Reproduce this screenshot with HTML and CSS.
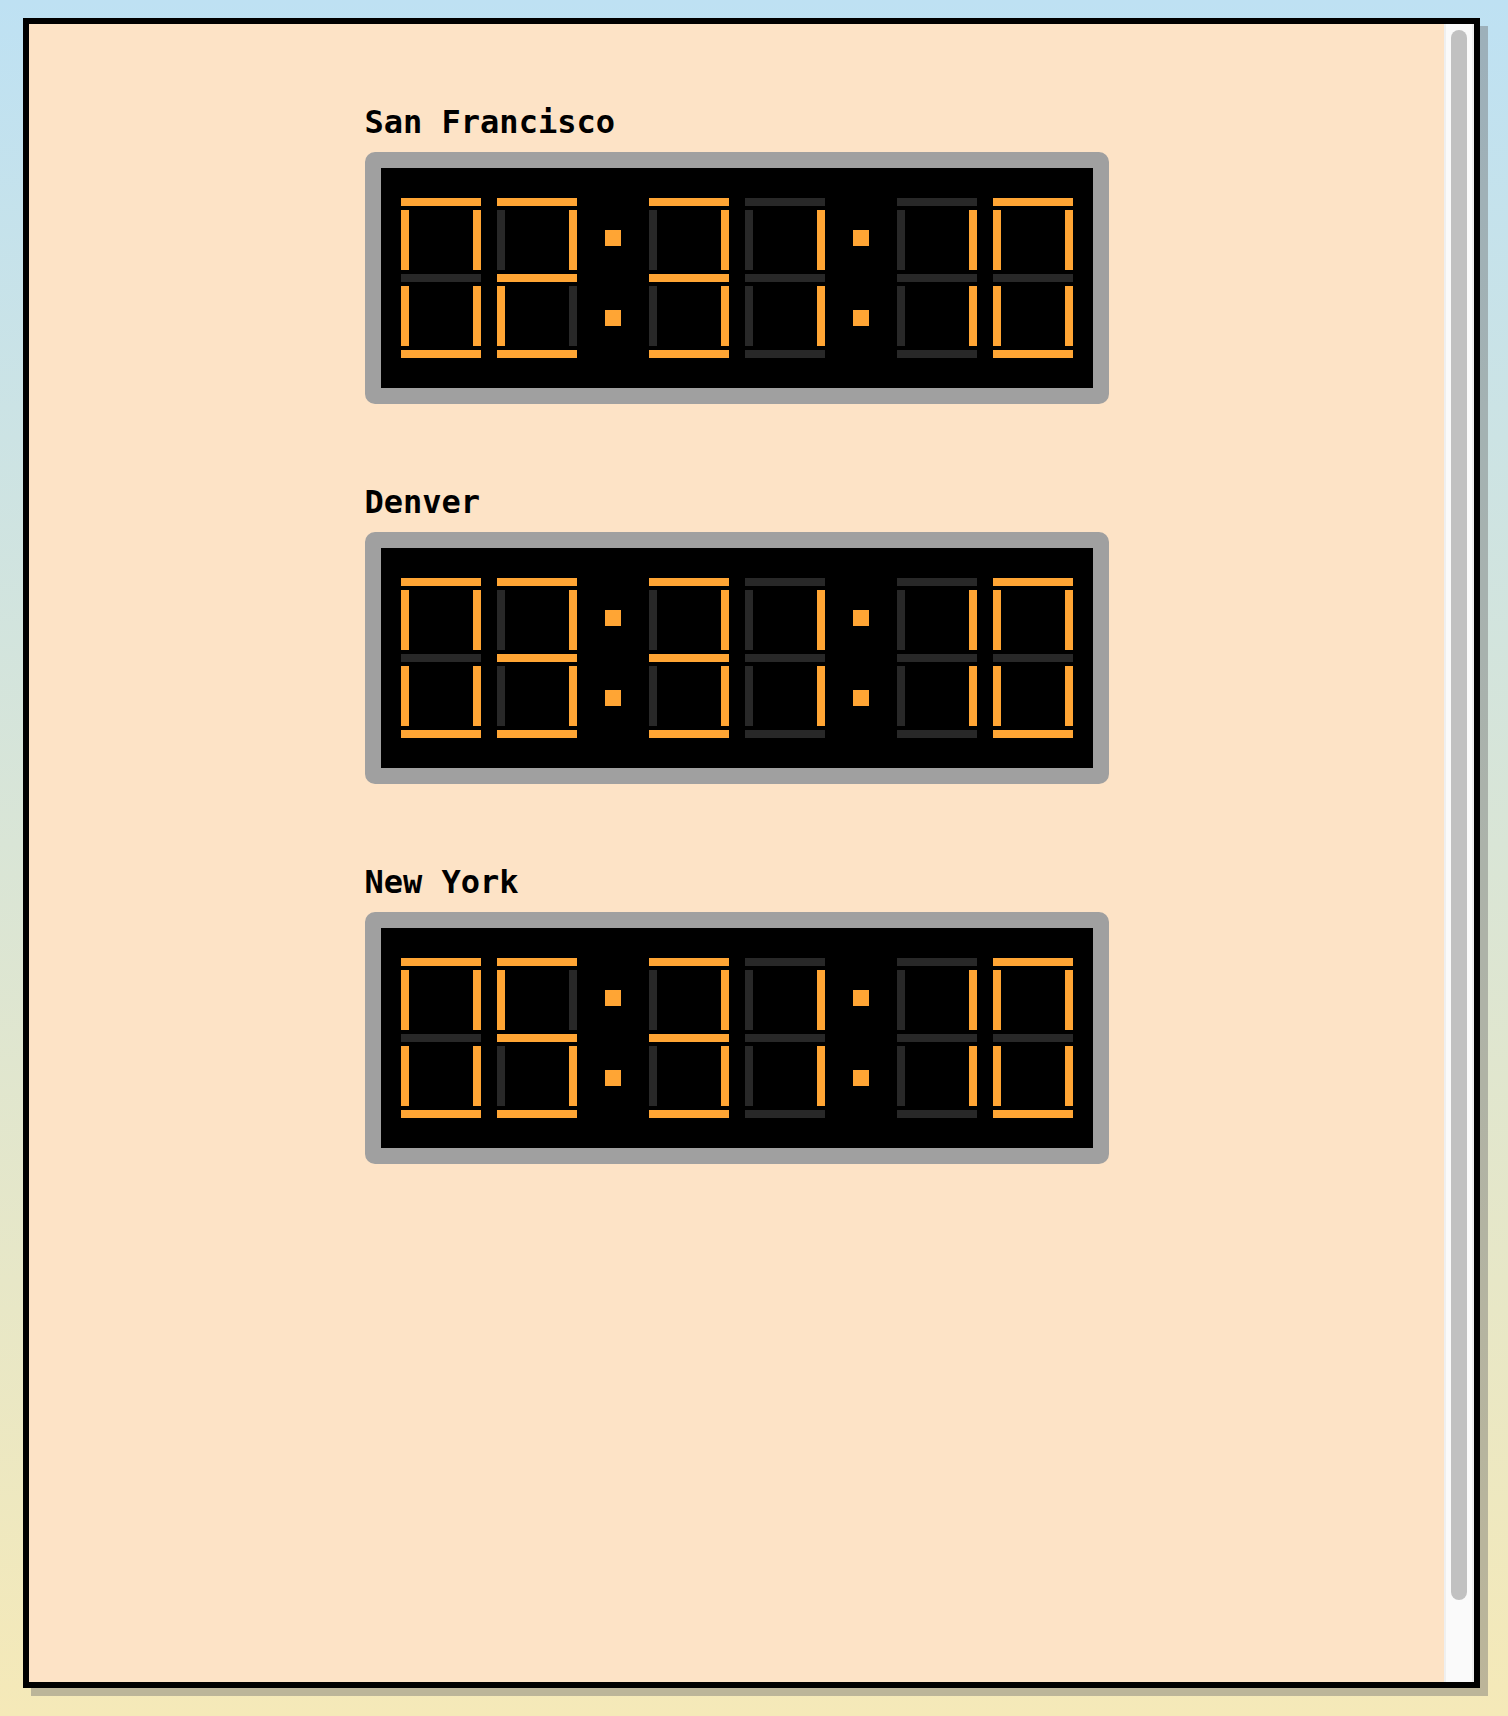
FILE: index.html
```html
<!DOCTYPE html>
<html lang="en">
<head>
<meta charset="utf-8">
<title>World Clocks</title>
<link rel="stylesheet" href="styles.css">
</head>
<body>
<div class="frame">
  <div class="viewport">
    <div class="content">
      <section class="city">
        <div class="label">San Francisco</div>
        <div class="clock">
          <div class="digit d0"><span class="a"></span><span class="f"></span><span class="b"></span><span class="g"></span><span class="e"></span><span class="c"></span><span class="d"></span></div>
          <div class="digit d2"><span class="a"></span><span class="f"></span><span class="b"></span><span class="g"></span><span class="e"></span><span class="c"></span><span class="d"></span></div>
          <div class="colon"><i></i><i></i></div>
          <div class="digit d3"><span class="a"></span><span class="f"></span><span class="b"></span><span class="g"></span><span class="e"></span><span class="c"></span><span class="d"></span></div>
          <div class="digit d1"><span class="a"></span><span class="f"></span><span class="b"></span><span class="g"></span><span class="e"></span><span class="c"></span><span class="d"></span></div>
          <div class="colon"><i></i><i></i></div>
          <div class="digit d1"><span class="a"></span><span class="f"></span><span class="b"></span><span class="g"></span><span class="e"></span><span class="c"></span><span class="d"></span></div>
          <div class="digit d0"><span class="a"></span><span class="f"></span><span class="b"></span><span class="g"></span><span class="e"></span><span class="c"></span><span class="d"></span></div>
        </div>
      </section>
      <section class="city">
        <div class="label">Denver</div>
        <div class="clock">
          <div class="digit d0"><span class="a"></span><span class="f"></span><span class="b"></span><span class="g"></span><span class="e"></span><span class="c"></span><span class="d"></span></div>
          <div class="digit d3"><span class="a"></span><span class="f"></span><span class="b"></span><span class="g"></span><span class="e"></span><span class="c"></span><span class="d"></span></div>
          <div class="colon"><i></i><i></i></div>
          <div class="digit d3"><span class="a"></span><span class="f"></span><span class="b"></span><span class="g"></span><span class="e"></span><span class="c"></span><span class="d"></span></div>
          <div class="digit d1"><span class="a"></span><span class="f"></span><span class="b"></span><span class="g"></span><span class="e"></span><span class="c"></span><span class="d"></span></div>
          <div class="colon"><i></i><i></i></div>
          <div class="digit d1"><span class="a"></span><span class="f"></span><span class="b"></span><span class="g"></span><span class="e"></span><span class="c"></span><span class="d"></span></div>
          <div class="digit d0"><span class="a"></span><span class="f"></span><span class="b"></span><span class="g"></span><span class="e"></span><span class="c"></span><span class="d"></span></div>
        </div>
      </section>
      <section class="city">
        <div class="label">New York</div>
        <div class="clock">
          <div class="digit d0"><span class="a"></span><span class="f"></span><span class="b"></span><span class="g"></span><span class="e"></span><span class="c"></span><span class="d"></span></div>
          <div class="digit d5"><span class="a"></span><span class="f"></span><span class="b"></span><span class="g"></span><span class="e"></span><span class="c"></span><span class="d"></span></div>
          <div class="colon"><i></i><i></i></div>
          <div class="digit d3"><span class="a"></span><span class="f"></span><span class="b"></span><span class="g"></span><span class="e"></span><span class="c"></span><span class="d"></span></div>
          <div class="digit d1"><span class="a"></span><span class="f"></span><span class="b"></span><span class="g"></span><span class="e"></span><span class="c"></span><span class="d"></span></div>
          <div class="colon"><i></i><i></i></div>
          <div class="digit d1"><span class="a"></span><span class="f"></span><span class="b"></span><span class="g"></span><span class="e"></span><span class="c"></span><span class="d"></span></div>
          <div class="digit d0"><span class="a"></span><span class="f"></span><span class="b"></span><span class="g"></span><span class="e"></span><span class="c"></span><span class="d"></span></div>
        </div>
      </section>
    </div>
  </div>
  <div class="scrollbar"><div class="thumb"></div></div>
</div>
</body>
</html>
```

FILE: styles.css
```css
html {
  min-height: 100%;
  background: linear-gradient(to bottom, #bee1f3 0%, #f5e9b8 100%);
}

body {
  margin: 0;
  padding: 18px 28px 28px 23px;
  font-family: "DejaVu Sans Mono", "Liberation Mono", monospace;
}

.frame {
  box-sizing: border-box;
  width: 1457px;
  height: 1670px;
  border: 6px solid #000;
  background: #fde3c6;
  box-shadow: 8px 8px 0 rgba(110, 110, 110, 0.42);
  display: flex;
}

.viewport {
  flex: 1;
  overflow: hidden;
}

.scrollbar {
  box-sizing: border-box;
  width: 30px;
  flex: none;
  background: #fafafa;
  border-left: 2px solid #efefef;
  border-right: 2px solid #efefef;
  padding: 6px 5px 0;
}

.thumb {
  width: 16px;
  height: 1570px;
  border-radius: 8px;
  background: #c1c1c1;
}

.content {
  width: 744px;
  margin: 0 auto;
  padding-top: 80px;
  display: flex;
  flex-direction: column;
  gap: 80px;
}

.city {
  display: flex;
  flex-direction: column;
}

.label {
  font-size: 32px;
  font-weight: bold;
  line-height: 37px;
  color: #000;
  margin-bottom: 11px;
}

.clock {
  box-sizing: border-box;
  width: 744px;
  height: 252px;
  border: 16px solid #a0a0a0;
  border-radius: 10px;
  background: #000;
  padding: 30px 20px;
  display: flex;
  gap: 16px;
}

.digit {
  width: 80px;
  height: 160px;
  display: grid;
  grid-template-columns: 8px 1fr 8px;
  grid-template-rows: 8px 60px 8px 60px 8px;
  row-gap: 4px;
}

.digit span {
  background: #282828;
}

.digit .a { grid-column: 1 / 4; grid-row: 1; }
.digit .f { grid-column: 1; grid-row: 2; }
.digit .b { grid-column: 3; grid-row: 2; }
.digit .g { grid-column: 1 / 4; grid-row: 3; }
.digit .e { grid-column: 1; grid-row: 4; }
.digit .c { grid-column: 3; grid-row: 4; }
.digit .d { grid-column: 1 / 4; grid-row: 5; }

.d0 .a, .d0 .b, .d0 .c, .d0 .d, .d0 .e, .d0 .f,
.d1 .b, .d1 .c,
.d2 .a, .d2 .b, .d2 .g, .d2 .e, .d2 .d,
.d3 .a, .d3 .b, .d3 .g, .d3 .c, .d3 .d,
.d5 .a, .d5 .f, .d5 .g, .d5 .c, .d5 .d {
  background: #ffa534;
}

.colon {
  width: 40px;
  height: 160px;
  box-sizing: border-box;
  padding-top: 32px;
  display: flex;
  flex-direction: column;
  align-items: center;
  gap: 64px;
}

.colon i {
  display: block;
  width: 16px;
  height: 16px;
  background: #ffa534;
}
```
